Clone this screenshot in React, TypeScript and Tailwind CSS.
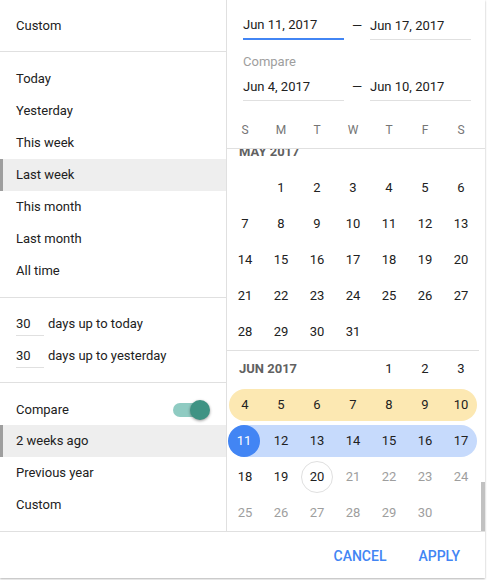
import React from "react";

type Cell = number | null;

const presets = ["Today", "Yesterday", "This week", "Last week", "This month", "Last month", "All time"];
const comparePresets = ["2 weeks ago", "Previous year", "Custom"];
const weekDays = ["S", "M", "T", "W", "T", "F", "S"];

const spanClass: Record<number, string> = {
  1: "col-span-1",
  2: "col-span-2",
  3: "col-span-3",
  4: "col-span-4",
  5: "col-span-5",
  6: "col-span-6",
};

function buildWeeks(offset: number, days: number): Cell[][] {
  const cells: Cell[] = [];
  for (let i = 0; i < offset; i++) cells.push(null);
  for (let d = 1; d <= days; d++) cells.push(d);
  while (cells.length % 7) cells.push(null);
  const weeks: Cell[][] = [];
  for (let i = 0; i < cells.length; i += 7) weeks.push(cells.slice(i, i + 7));
  return weeks;
}

function PresetRow({ label, active }: { label: string; active?: boolean }) {
  return (
    <div
      className={`h-8 flex items-center pl-4 border-l-[3px] ${
        active ? "bg-[#eeeeee] border-[#9e9e9e]" : "border-transparent"
      }`}
    >
      <span className="-ml-[3px]">{label}</span>
    </div>
  );
}

function DateInput({ value, focused }: { value: string; focused?: boolean }) {
  return (
    <div
      className={`w-[101px] h-[28px] flex items-center text-[13px] text-[#212121] ${
        focused ? "border-b-2 border-[#4285f4]" : "border-b border-[#e0e0e0]"
      }`}
    >
      {value}
    </div>
  );
}

function Month({
  name,
  offset,
  days,
  isJune,
}: {
  name: string;
  offset: number;
  days: number;
  isJune?: boolean;
}) {
  const weeks = buildWeeks(offset, days);
  const label = <span className="pl-3 text-[13px] font-bold text-[#616161]">{name}</span>;

  const renderDay = (d: Cell, col: number) => {
    if (d === null) return <div key={col} />;
    let band = "";
    if (isJune && d >= 4 && d <= 10) band = "bg-[#fce8b2]";
    if (isJune && d >= 11 && d <= 17) band = "bg-[#c6dafc]";
    const edge =
      band && col === 0
        ? "ml-[2px] pr-[2px] rounded-l-full"
        : band && col === 6
        ? "mr-[2px] pl-[2px] rounded-r-full"
        : "";
    const future = isJune && d > 20;
    return (
      <div key={col} className="h-9 py-[2px]">
        <div className={`h-8 flex items-center justify-center ${band} ${edge}`}>
          {isJune && d === 11 ? (
            <span className="w-8 h-8 rounded-full bg-[#4285f4] text-white flex items-center justify-center -ml-[2px]">
              {d}
            </span>
          ) : isJune && d === 20 ? (
            <span className="w-8 h-8 rounded-full border border-[#e0e0e0] flex items-center justify-center">
              {d}
            </span>
          ) : (
            <span className={future ? "text-[#9e9e9e]" : ""}>{d}</span>
          )}
        </div>
      </div>
    );
  };

  return (
    <div className={`w-[252px] text-[13px] text-[#212121] ${isJune ? "" : "border-b border-[#e0e0e0]"}`}>
      {offset < 3 && <div className="h-9 flex items-center">{label}</div>}
      {weeks.map((week, wi) => (
        <div key={wi} className="grid grid-cols-7">
          {wi === 0 && offset >= 3 ? (
            <>
              <div className={`${spanClass[offset]} h-9 flex items-center`}>{label}</div>
              {week.slice(offset).map((d, i) => renderDay(d, i + offset))}
            </>
          ) : (
            week.map((d, i) => renderDay(d, i))
          )}
        </div>
      ))}
    </div>
  );
}

export default function App() {
  return (
    <div className="w-[487px] h-[580px] bg-white font-[Roboto,sans-serif] text-[#212121]">
      <div className="w-[485px] h-[578px] flex flex-col bg-white shadow-[0_1px_2px_rgba(0,0,0,0.3)]">
        <div className="flex flex-1 min-h-0">
          {/* presets */}
          <div className="w-[227px] shrink-0 border-r border-[#e0e0e0] flex flex-col text-[13px]">
            <div className="h-[52px] border-b border-[#e0e0e0] flex items-center pl-4">Custom</div>
            <div className="pt-[11px] pb-[10px] border-b border-[#e0e0e0]">
              {presets.map((p) => (
                <PresetRow key={p} label={p} active={p === "Last week"} />
              ))}
            </div>
            <div className="pt-[10px] pb-[10px] border-b border-[#e0e0e0] px-4">
              {["days up to today", "days up to yesterday"].map((t) => (
                <div key={t} className="h-8 flex items-center gap-[4px]">
                  <div className="w-[28px] h-6 flex items-center border-b border-[#e0e0e0]">30</div>
                  <span>{t}</span>
                </div>
              ))}
            </div>
            <div className="pt-[10px]">
              <div className="h-8 flex items-center justify-between pl-4 pr-4 pt-[1px]">
                <span>Compare</span>
                <div className="relative w-[37px] h-5 flex items-center">
                  <div className="w-[34px] h-[14px] rounded-full bg-[#8fcbc2]" />
                  <div className="absolute right-0 top-0 w-5 h-5 rounded-full bg-[#3f9384] shadow-[0_1px_3px_rgba(0,0,0,0.4)]" />
                </div>
              </div>
              {comparePresets.map((p) => (
                <PresetRow key={p} label={p} active={p === "2 weeks ago"} />
              ))}
            </div>
          </div>

          {/* calendar */}
          <div className="flex-1 min-w-0 flex flex-col">
            <div className="h-[149px] shrink-0 border-b border-[#e0e0e0] pt-[12px]">
              <div className="flex items-center pl-4">
                <DateInput value="Jun 11, 2017" focused />
                <span className="w-[26px] text-center text-[13px]">—</span>
                <DateInput value="Jun 17, 2017" />
              </div>
              <div className="mt-[14px] h-4 flex items-center pl-4 text-[13px] text-[#9e9e9e]">Compare</div>
              <div className="mt-[3px] flex items-center pl-4">
                <DateInput value="Jun 4, 2017" />
                <span className="w-[26px] text-center text-[13px]">—</span>
                <DateInput value="Jun 10, 2017" />
              </div>
              <div className="mt-[11px] w-[252px] grid grid-cols-7 h-9 text-[12px] text-[#757575]">
                {weekDays.map((d, i) => (
                  <div key={i} className="flex items-center justify-center">
                    {d}
                  </div>
                ))}
              </div>
            </div>
            <div className="relative flex-1 min-h-0 overflow-hidden">
              <div className="-mt-[15px]">
                <Month name="MAY 2017" offset={1} days={31} />
                <Month name="JUN 2017" offset={4} days={30} isJune />
              </div>
              <div className="absolute right-0 bottom-0 w-1 h-[49px] bg-[#c1c1c1]" />
            </div>
          </div>
        </div>

        <div className="h-[47px] shrink-0 border-t border-[#e0e0e0] flex items-center justify-end gap-8 pr-[25px] pt-[2px] text-[14px] font-medium text-[#4285f4]">
          <button>CANCEL</button>
          <button>APPLY</button>
        </div>
      </div>
    </div>
  );
}
